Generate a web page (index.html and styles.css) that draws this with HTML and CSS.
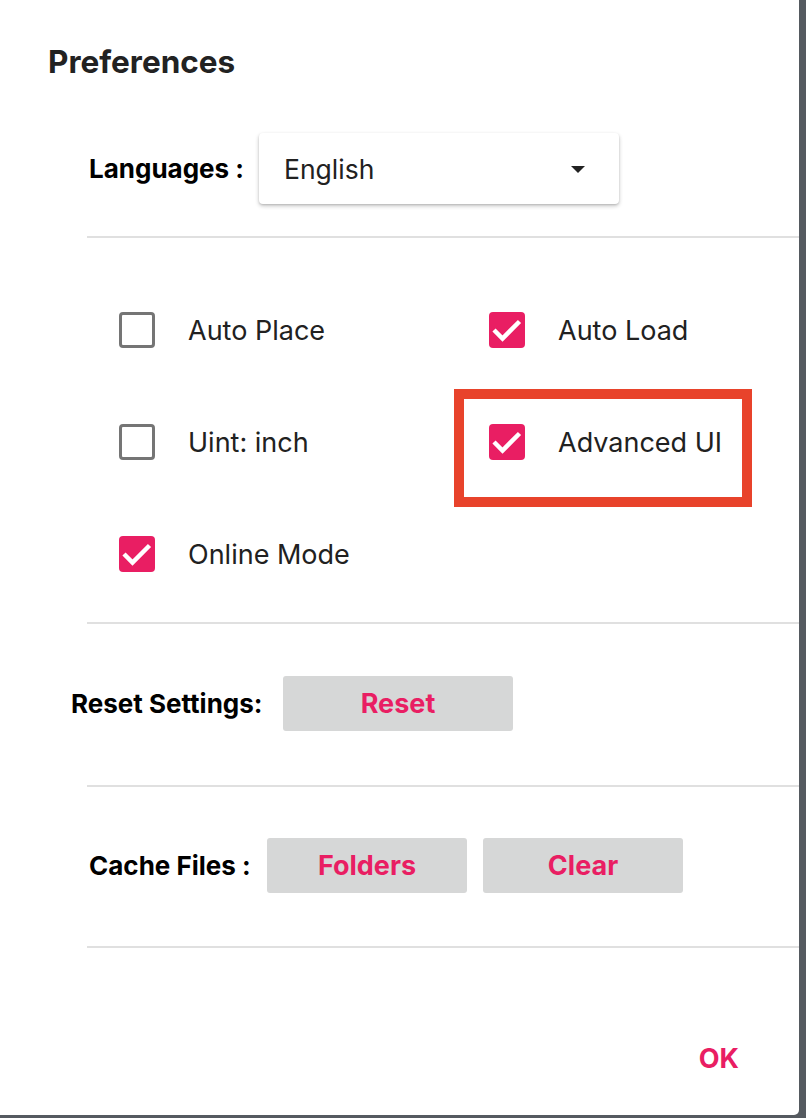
FILE: index.html
```html
<!DOCTYPE html>
<html>
<head>
<meta charset="utf-8">
<link rel="stylesheet" href="styles.css">
</head>
<body>
<div class="dialog">
  <h2 class="title">Preferences</h2>

  <div class="section lang-row">
    <span class="label">Languages :</span>
    <div class="select">
      <span class="select-value">English</span>
      <span class="select-arrow"></span>
    </div>
  </div>
  <div class="divider"></div>

  <div class="checks">
    <div class="check-item">
      <span class="box"></span><span class="check-label">Auto Place</span>
    </div>
    <div class="check-item">
      <span class="box checked"><svg viewBox="0 0 36 36"><path d="M5 18 L13.5 26.5 L30.5 9.5"/></svg></span><span class="check-label">Auto Load</span>
    </div>
    <div class="check-item">
      <span class="box"></span><span class="check-label">Uint: inch</span>
    </div>
    <div class="check-item highlighted">
      <span class="box checked"><svg viewBox="0 0 36 36"><path d="M5 18 L13.5 26.5 L30.5 9.5"/></svg></span><span class="check-label">Advanced UI</span>
      <span class="highlight-frame"></span>
    </div>
    <div class="check-item">
      <span class="box checked"><svg viewBox="0 0 36 36"><path d="M5 18 L13.5 26.5 L30.5 9.5"/></svg></span><span class="check-label">Online Mode</span>
    </div>
  </div>
  <div class="divider"></div>

  <div class="reset-row">
    <span class="label">Reset Settings:</span>
    <button class="btn btn-reset">Reset</button>
  </div>
  <div class="divider"></div>

  <div class="section cache-row">
    <span class="label">Cache Files :</span>
    <button class="btn btn-cache">Folders</button>
    <button class="btn btn-cache">Clear</button>
  </div>
  <div class="divider"></div>

  <div class="actions">
    <button class="ok">OK</button>
  </div>
</div>
</body>
</html>
```

FILE: styles.css
```css
html, body {
  margin: 0;
  padding: 0;
}
body {
  background: #555a60;
  width: 806px;
  height: 1118px;
  overflow: hidden;
  font-family: Inter, "Noto Sans", sans-serif;
  color: #212121;
}
.dialog {
  width: 799px;
  height: 1115px;
  background: #ffffff;
  border-bottom-right-radius: 5px;
  box-sizing: border-box;
  display: flex;
  flex-direction: column;
}
.title {
  margin: 42px 0 0 48px;
  font-size: 31.5px;
  line-height: 40px;
  font-weight: 700;
  color: #222222;
  height: 40px;
}
.section {
  display: flex;
  align-items: center;
  padding-left: 89px;
}
.label {
  font-size: 26px;
  font-weight: 700;
  color: #000000;
  font-family: Inter, sans-serif;
  white-space: nowrap;
}
.lang-row {
  margin-top: 51px;
  height: 71px;
}
.lang-row .label {
  width: 170px;
}
.select {
  width: 360px;
  height: 71px;
  border-radius: 4px;
  background: #fff;
  box-shadow: 0 2px 4px rgba(0,0,0,0.22), 0 1px 2px rgba(0,0,0,0.12);
  display: flex;
  align-items: center;
  box-sizing: border-box;
  padding: 0 34px 0 25px;
}
.select-value {
  flex: 1;
  font-size: 26.5px;
  color: #212121;
}
.select-arrow {
  width: 0;
  height: 0;
  border-left: 7px solid transparent;
  border-right: 7px solid transparent;
  border-top: 7px solid #222;
  margin-top: 2px;
}
.divider {
  height: 2px;
  background: #e0e0e0;
  margin-left: 87px;
  width: 712px;
}
.lang-row + .divider {
  margin-top: 32px;
}
.checks {
  display: grid;
  grid-template-columns: 370px 300px;
  grid-auto-rows: 112px;
  padding: 36px 0 12px 119px;
}
.check-item {
  display: flex;
  align-items: center;
  position: relative;
}
.box {
  width: 36px;
  height: 36px;
  box-sizing: border-box;
  border: 3px solid #757575;
  border-radius: 4px;
  flex: none;
}
.box.checked {
  border: none;
  background: #e91e63;
}
.box svg {
  display: block;
  width: 36px;
  height: 36px;
}
.box svg path {
  fill: none;
  stroke: #ffffff;
  stroke-width: 4.5;
}
.check-label {
  margin-left: 33px;
  font-size: 27px;
  color: #212121;
}
.highlight-frame {
  position: absolute;
  left: -35px;
  top: 3px;
  width: 298px;
  height: 118px;
  box-sizing: border-box;
  border: 10px solid #e8432b;
}
.reset-row {
  display: flex;
  align-items: center;
  padding-left: 71px;
  margin-top: 52px;
  height: 55px;
  margin-bottom: 54px;
}
.reset-row .label {
  width: 212px;
}
.btn {
  border: none;
  background: #d6d7d7;
  border-radius: 3px;
  color: #e91e63;
  font-family: Inter, sans-serif;
  font-weight: 700;
  font-size: 27px;
  height: 55px;
  padding: 0;
  cursor: pointer;
}
.btn-reset {
  width: 230px;
}
.cache-row {
  margin-top: 51px;
  height: 55px;
  margin-bottom: 53px;
}
.cache-row .label {
  width: 178px;
}
.btn-cache {
  width: 200px;
  margin-right: 16px;
}
.actions {
  display: flex;
  justify-content: flex-end;
  padding-right: 60px;
  margin-top: 92px;
}
.ok {
  border: none;
  background: none;
  color: #e91e63;
  font-family: Inter, sans-serif;
  font-weight: 700;
  font-size: 27px;
  padding: 0;
  height: 36px;
}
```
